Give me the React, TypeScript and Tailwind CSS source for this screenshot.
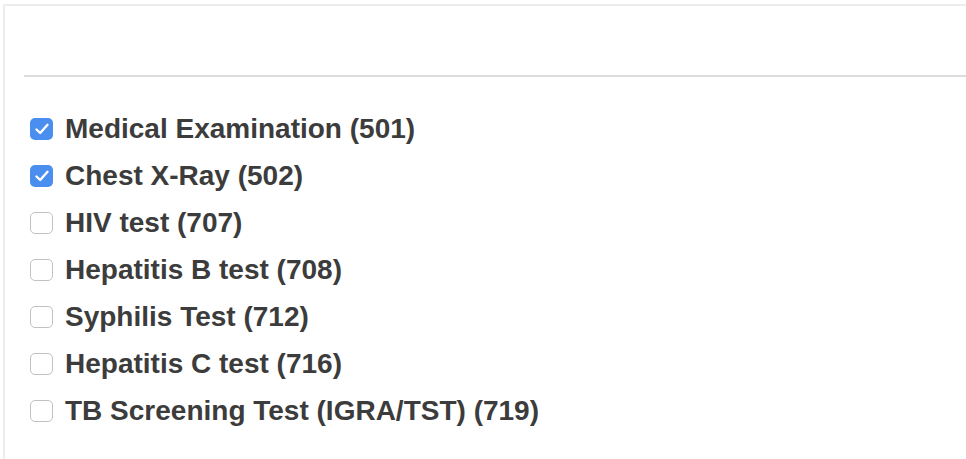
import React from 'react';

const tests = [
  { label: 'Medical Examination (501)', checked: true },
  { label: 'Chest X-Ray (502)', checked: true },
  { label: 'HIV test (707)', checked: false },
  { label: 'Hepatitis B test (708)', checked: false },
  { label: 'Syphilis Test (712)', checked: false },
  { label: 'Hepatitis C test (716)', checked: false },
  { label: 'TB Screening Test (IGRA/TST) (719)', checked: false },
];

const Box: React.FC<{ checked: boolean }> = ({ checked }) =>
  checked ? (
    <span className="w-[23px] h-[22px] rounded-[5px] bg-[#4a8ef0] flex items-center justify-center shrink-0">
      <svg width="18" height="18" viewBox="0 0 18 18" fill="none">
        <path d="M3.5 9.5 L7.2 13 L14.5 4.8" stroke="white" strokeWidth="2.4" strokeLinecap="round" strokeLinejoin="round" />
      </svg>
    </span>
  ) : (
    <span className="w-[23px] h-[22px] rounded-[5px] border-[1.5px] border-[#c2c2c2] bg-white shrink-0" />
  );

const App: React.FC = () => {
  return (
    <div className="w-[966px] h-[459px] bg-white pt-[4px] pl-[3px] overflow-hidden">
      <div className="h-full border-t-2 border-l-2 border-[#ededed] pl-[19px] pt-[69px]">
        <div className="h-[2px] bg-[#dcdcdc]" />

        {/* test list */}
        <ul className="mt-[28px] ml-[6px]">
          {tests.map((t) => (
            <li key={t.label} className="h-[47px] flex items-center gap-[12px]">
              <Box checked={t.checked} />
              <span className="[font-family:'Liberation_Sans',Arial,sans-serif] font-bold text-[28px] leading-none text-[#3c3c3c]">
                {t.label}
              </span>
            </li>
          ))}
        </ul>
      </div>
    </div>
  );
};

export default App;
